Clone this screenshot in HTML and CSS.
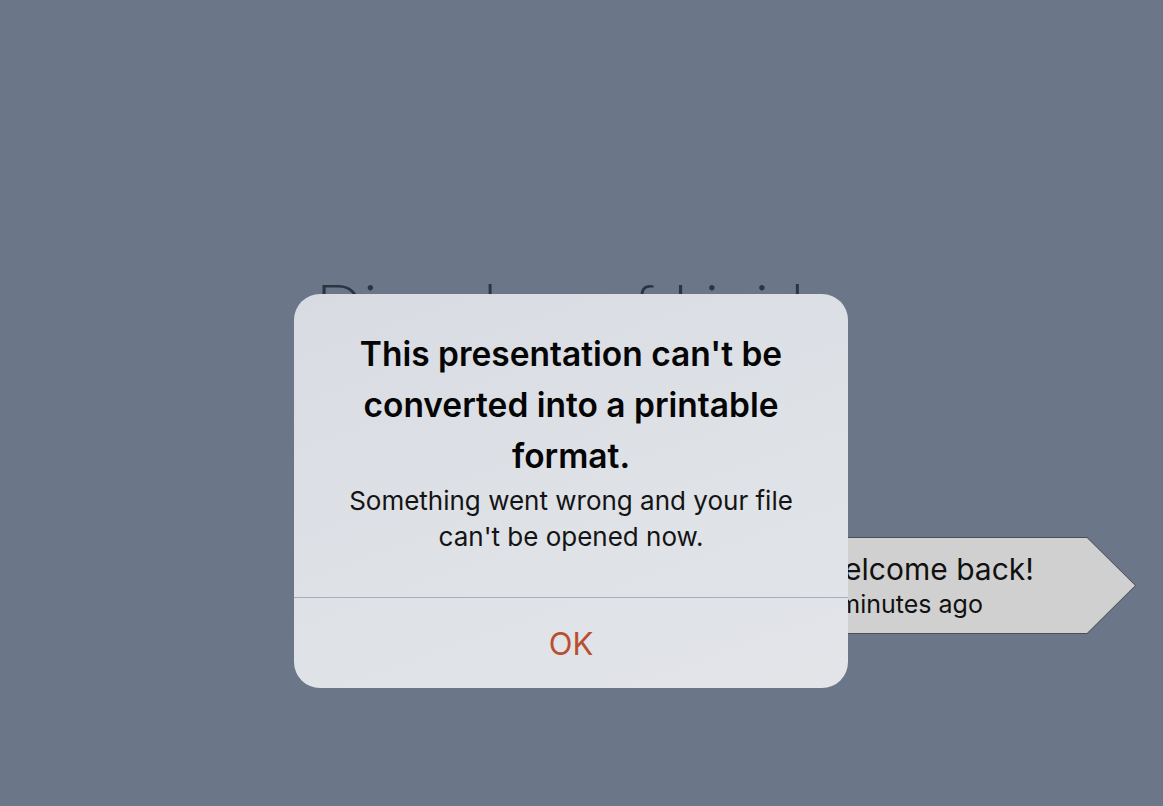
FILE: index.html
```html
<!DOCTYPE html>
<html lang="en">
<head>
  <meta charset="UTF-8" />
  <meta name="viewport" content="width=device-width, initial-scale=1.0"/>
  <title>Presentation</title>
  <link rel="stylesheet" href="styles.css">
</head>
<body>

  <div class="stage">
    <h1 class="slide-title">Disorders of Lipid Metabolism</h1>

    <div class="toast">
      <div class="toast-title">Welcome back!</div>
      <div class="toast-time">2 minutes ago</div>
    </div>

    <div class="alert" role="alertdialog">
      <div class="alert-body">
        <h2 class="alert-title">This presentation can't be converted into a printable format.</h2>
        <p class="alert-message">Something went wrong and your file can't be opened now.</p>
      </div>
      <button type="button" class="alert-btn">OK</button>
    </div>
  </div>

</body>
</html>
```

FILE: styles.css
```css
html, body {
  height: 100%;
  margin: 0;
  background: #6b7789;
  font-family: "Inter", "Liberation Sans", Arial, sans-serif;
  overflow: hidden;
}

.stage {
  position: relative;
  height: 100%;
}

.slide-title {
  margin: 0;
  padding: 264px 0 0 316px;
  max-width: 520px;
  font-family: "Lato", sans-serif;
  font-weight: 300;
  font-size: 62px;
  line-height: 80px;
  letter-spacing: 1px;
  color: #2c3442;
}

/* toast behind the dialog */
.toast {
  position: absolute;
  left: 760px;
  top: 537px;
  width: 376px;
  height: 97px;
  box-sizing: border-box;
  padding: 14px 0 0 56px;
  background: #4a4f57;
  clip-path: polygon(0 0, 327px 0, 100% 50%, 327px 100%, 0 100%);
  color: #111;
}

.toast::before {
  content: "";
  position: absolute;
  inset: 1px;
  background: #d0d0d0;
  clip-path: polygon(0 0, 326px 0, 100% 50%, 326px 100%, 0 100%);
  z-index: 0;
}

.toast-title,
.toast-time {
  position: relative;
  z-index: 1;
  white-space: nowrap;
}

.toast-title {
  font-size: 30px;
  line-height: 36px;
}

.toast-time {
  font-size: 25px;
  line-height: 34px;
}

/* alert dialog */
.alert {
  position: absolute;
  left: 294px;
  top: 294px;
  width: 554px;
  height: 394px;
  border-radius: 26px;
  background: linear-gradient(160deg, #d8dbe1 0%, #dfe2e7 60%, #e2e4e8 100%);
  display: flex;
  flex-direction: column;
  overflow: hidden;
}

.alert-body {
  flex: 1;
  display: flex;
  flex-direction: column;
  align-items: center;
  padding: 35px 40px 0;
  text-align: center;
  border-bottom: 1px solid #a9aeb6;
}

.alert-title {
  margin: 0;
  font-size: 33.5px;
  line-height: 51px;
  font-weight: 600;
  color: #050505;
  max-width: 460px;
}

.alert-message {
  margin: 1px 0 0;
  font-size: 26px;
  line-height: 36px;
  color: #141414;
  max-width: 470px;
}

.alert-btn {
  height: 90px;
  border: none;
  background: transparent;
  font-family: inherit;
  font-size: 31px;
  color: #b8502f;
  cursor: pointer;
}
```
